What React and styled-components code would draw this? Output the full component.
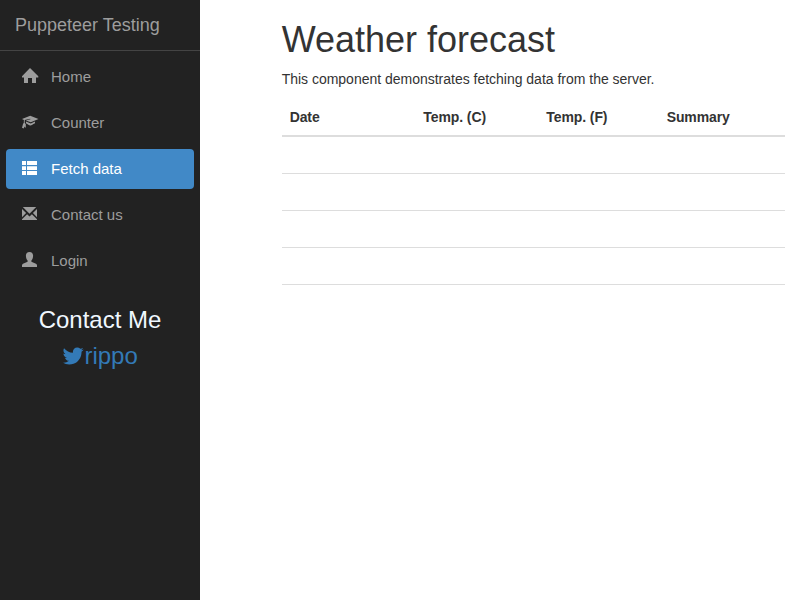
import React from "react";
import styled, { createGlobalStyle } from "styled-components";

const GlobalStyle = createGlobalStyle`
  *, *::before, *::after { box-sizing: border-box; }
  body {
    margin: 0;
    background: #fff;
    color: #333;
    font: 14px/20px "Liberation Sans", Arial, sans-serif;
  }
`;

const Page = styled.div`
  display: flex;
  height: 100vh;
  overflow: hidden;
`;

const Sidebar = styled.aside`
  flex: 0 0 200px;
  background: #222;
`;

const Brand = styled.div`
  height: 51px;
  padding: 15px;
  border-bottom: 1px solid #444;
  color: #9d9d9d;
  font-size: 18px;
`;

const Nav = styled.nav`
  display: flex;
  flex-direction: column;
  gap: 6px;
  padding: 6px 6px 0;
`;

const NavLink = styled.a`
  display: flex;
  align-items: center;
  height: 40px;
  padding-left: 16px;
  border-radius: 4px;
  background: ${(p) => (p.$active ? "#4189c7" : "transparent")};
  color: ${(p) => (p.$active ? "#fff" : "#9d9d9d")};
  font-size: 15px;
`;

const NavIcon = styled.svg`
  width: 16px;
  height: 16px;
  margin: 0 13px 2px 0;
  fill: currentColor;
`;

const Contact = styled.section`
  display: flex;
  flex-direction: column;
  align-items: center;
  gap: 10px;
  padding-top: 26px;
  font-size: 24px;
  line-height: 26px;
`;

const ContactTitle = styled.div`
  color: #f0f8ff;
`;

const ContactLink = styled.a`
  display: flex;
  color: #337ab7;
`;

const TwitterIcon = styled.svg`
  width: 22.28px;
  height: 24px;
  margin-top: 0.5px;
  fill: currentColor;
`;

const Main = styled.main`
  flex: 1;
  padding: 20px 15px 0 81.67px;
`;

const Title = styled.h1`
  margin: 0 0 10px;
  font-size: 36px;
  font-weight: 500;
  line-height: 39px;
`;

const Intro = styled.p`
  margin: 0 0 10px;
  letter-spacing: -0.012px;
`;

const Table = styled.table`
  width: 100%;
  border-collapse: separate;
  border-spacing: 0;
  table-layout: fixed;
`;

const Heading = styled.th`
  width: ${(p) => p.$width};
  padding: 8px;
  border-bottom: 2px solid #ddd;
  letter-spacing: -0.1px;
  text-align: left;
`;

const Cell = styled.td`
  height: 37px;
  padding: 8px;
  border-bottom: 1px solid #ddd;
`;

const icons = {
  home: <path d="M8 0 L16.3 8.2 V9.5 H14 V15 H10 V10 H6 V15 H2 V9.5 H0 V8.2 Z" />,
  cap: (
    <path d="M8.2 1.8 L16.5 4.9 L8.8 8.2 L3.8 6.4 L8.5 5.3 L8.2 4.7 L2.8 6 L2.7 8.8 L3.8 10.2 V14 L2.6 12.6 L1.7 14.4 L0 13.8 L1 10 L1.8 8.8 L1.9 6 L0 4.9 Z M4 7.5 L8.8 9.4 L13 7.6 V9.3 L11.4 10 Q8.9 12.6 6 10.6 L4 9.3 Z" />
  ),
  list: <path d="M0 1H4V5H0Z M5 1H15V5H5Z M0 6.2H4V10H0Z M5 6.2H15V10H5Z M0 11H4V15H0Z M5 11H15V15H5Z" />,
  mail: <path d="M.8 1H14.2L7.5 7.7Z M0 3L4.1 7.1L0 11.2Z M15 3L10.9 7.1L15 11.2Z M5.1 8.2L7.5 10.6L9.9 8.2L15 13.3V14H0V13.3Z" />,
  user: <path d="M7.5 0C9.8 0 11.1 1.5 11.1 3.7C11.1 6 10.2 7.6 9.4 8.4V9.7L14 11.8Q15 12.3 15 13.3V15H0V13.3Q0 12.3 1 11.8L5.6 9.7V8.4C4.8 7.6 3.9 6 3.9 3.7C3.9 1.5 5.2 0 7.5 0Z" />,
};

const links = [
  ["Home", "home"],
  ["Counter", "cap"],
  ["Fetch data", "list"],
  ["Contact us", "mail"],
  ["Login", "user"],
];

const columns = [
  ["Date", "133.7px"],
  ["Temp. (C)", "123px"],
  ["Temp. (F)", "120.3px"],
  ["Summary", "auto"],
];

export default function App() {
  return (
    <Page>
      <GlobalStyle />
      <Sidebar>
        <Brand>Puppeteer Testing</Brand>
        <Nav>
          {links.map(([label, icon]) => (
            <NavLink key={label} $active={label === "Fetch data"}>
              <NavIcon viewBox="0 0 16 16" overflow="visible">{icons[icon]}</NavIcon>
              {label}
            </NavLink>
          ))}
        </Nav>
        <Contact>
          <ContactTitle>Contact Me</ContactTitle>
          <ContactLink>
            <TwitterIcon viewBox="64 0 1664 1792">
              <path d="M1684 408q-67 98-162 167 1 14 1 42 0 130-38 259.5t-115.5 248.5-184.5 210.5-258 146-323 54.5q-271 0-496-145 35 4 78 4 225 0 401-138-105-2-188-64.5t-114-159.5q33 5 61 5 43 0 85-11-112-23-185.5-111.5t-73.5-205.5v-4q68 38 146 41-66-44-105-115t-39-154q0-88 44-163 121 149 294.5 238.5t371.5 99.5q-8-38-8-74 0-134 94.5-228.5t228.5-94.5q140 0 236 102 109-21 205-78-37 115-142 178 93-10 186-50z" />
            </TwitterIcon>
            rippo
          </ContactLink>
        </Contact>
      </Sidebar>
      <Main>
        <Title>Weather forecast</Title>
        <Intro>This component demonstrates fetching data from the server.</Intro>
        <Table>
          <thead>
            <tr>
              {columns.map(([name, width]) => (
                <Heading key={name} $width={width}>{name}</Heading>
              ))}
            </tr>
          </thead>
          <tbody>
            {[0, 1, 2, 3].map((row) => (
              <tr key={row}>
                {columns.map(([name]) => <Cell key={name} />)}
              </tr>
            ))}
          </tbody>
        </Table>
      </Main>
    </Page>
  );
}
